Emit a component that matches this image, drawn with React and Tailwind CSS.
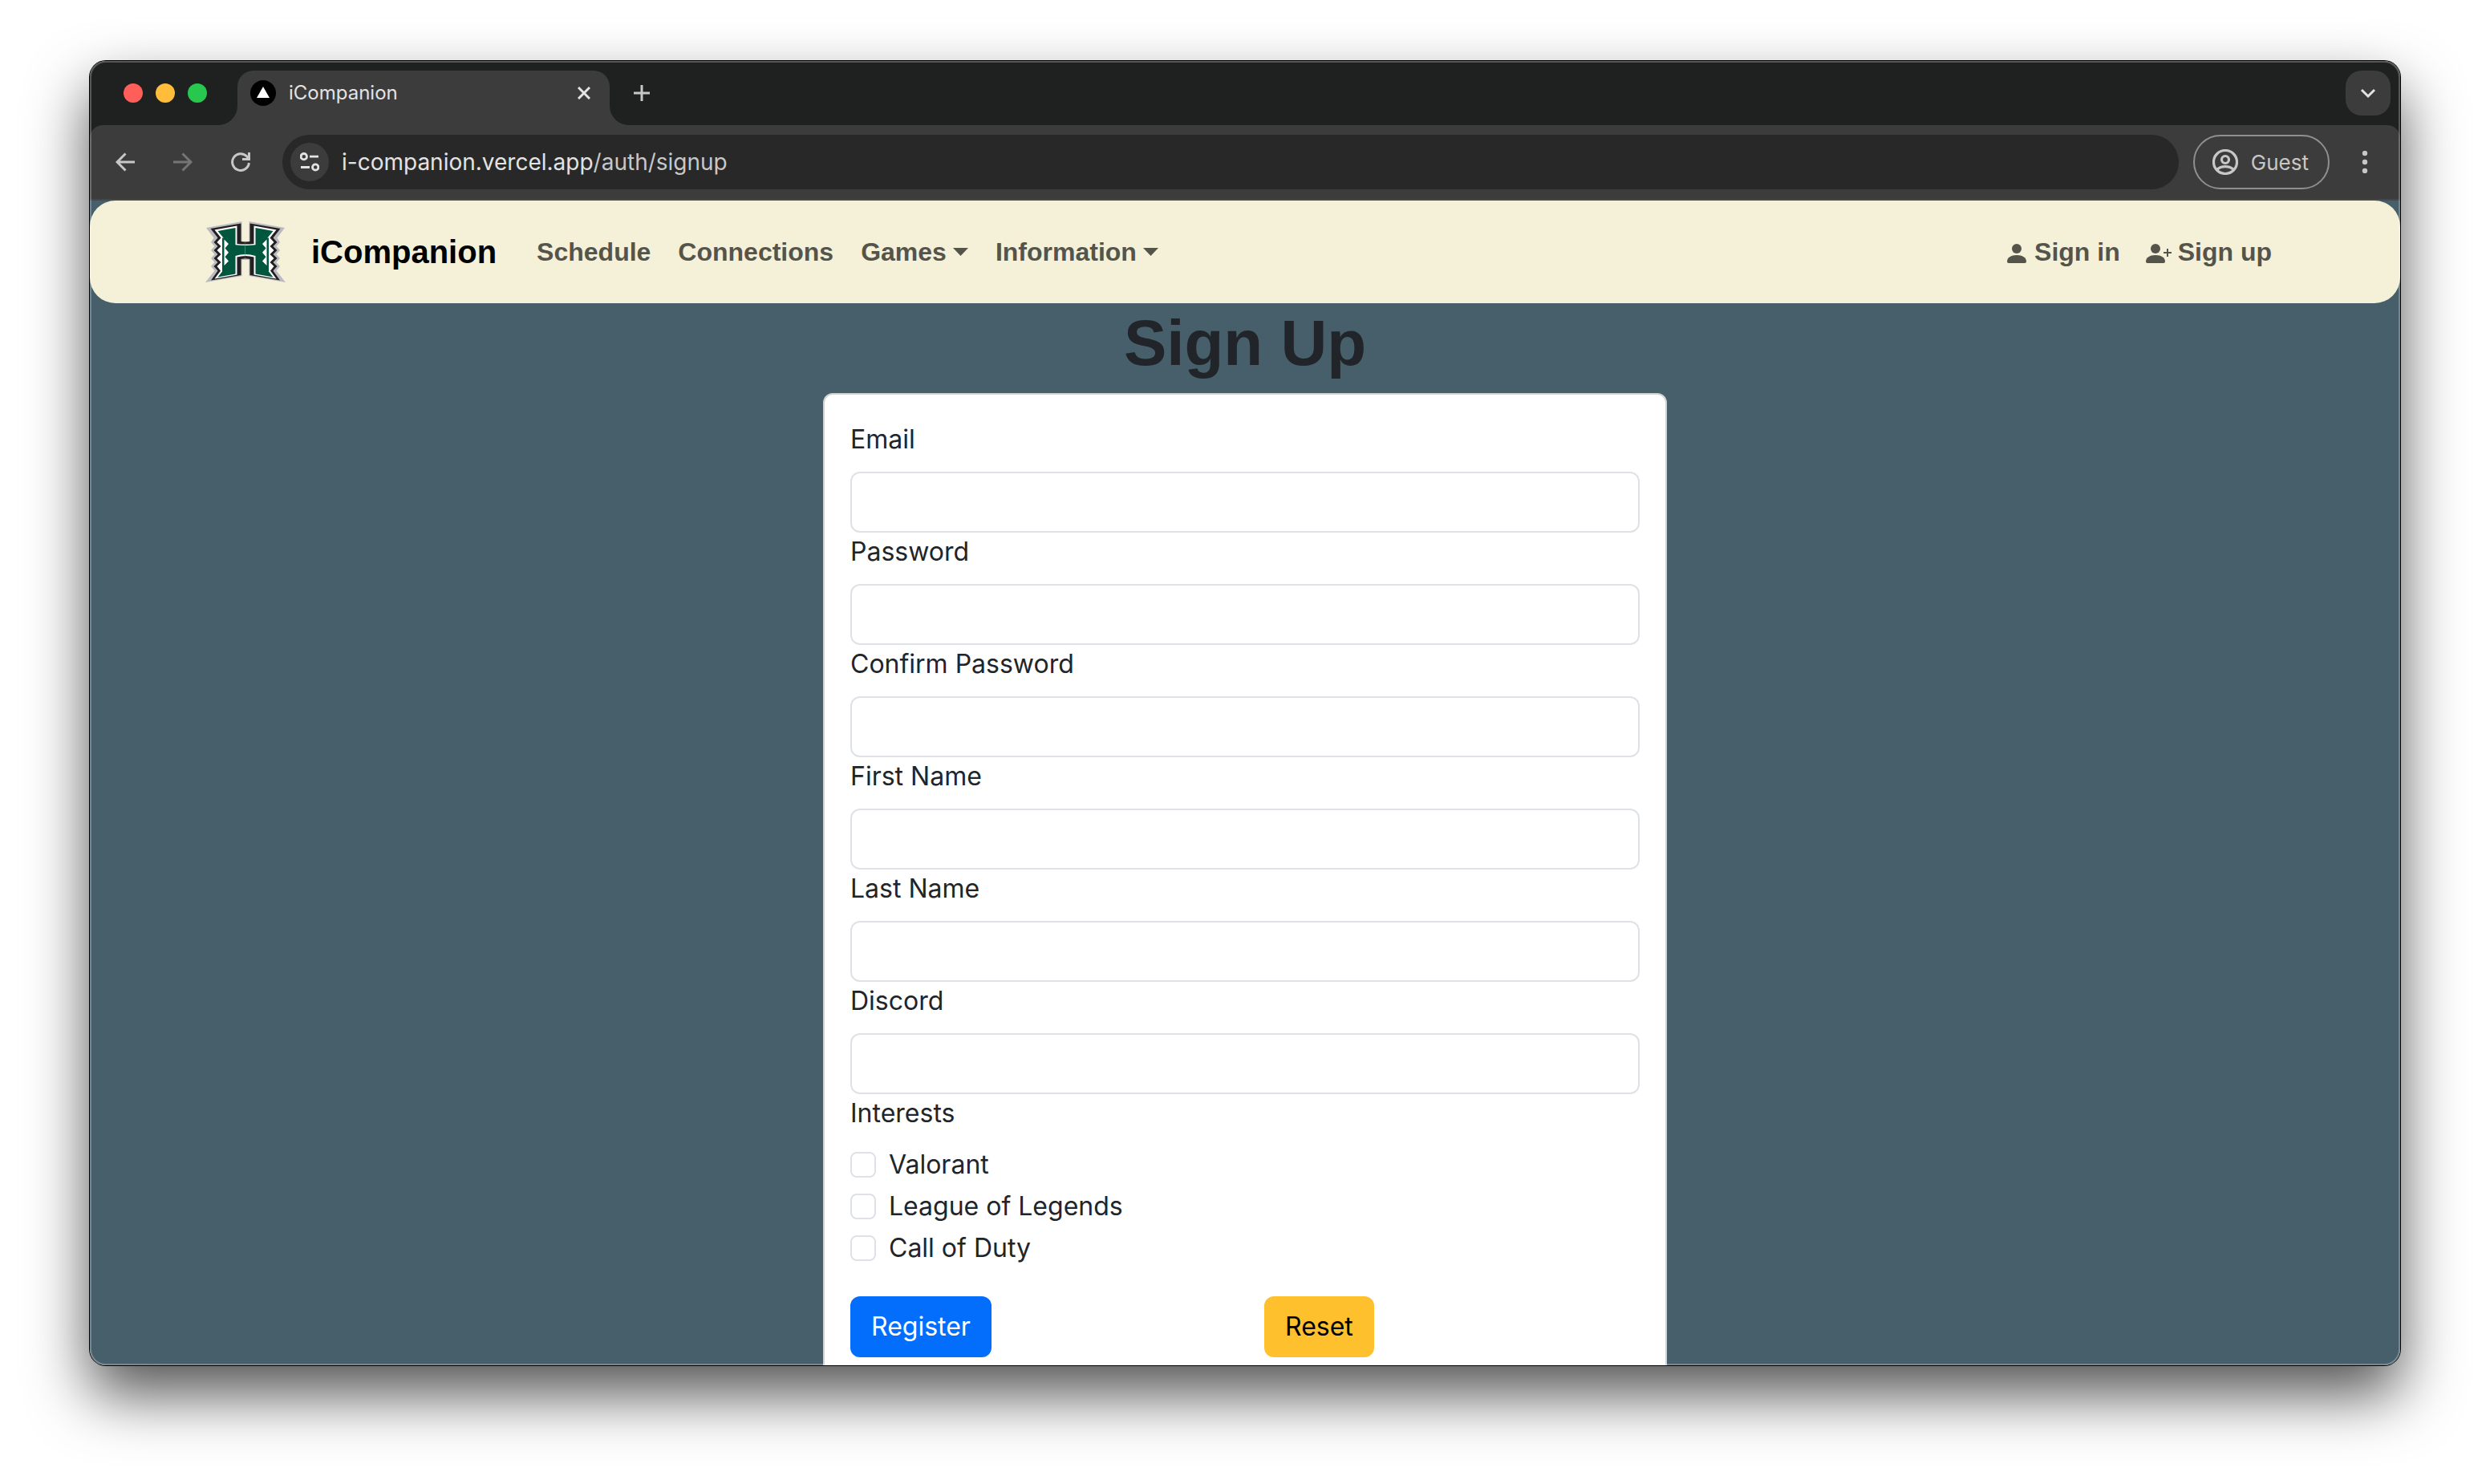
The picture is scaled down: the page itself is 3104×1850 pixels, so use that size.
import React from "react";

const FIELDS = [
  { id: "email", label: "Email", type: "email" },
  { id: "password", label: "Password", type: "password" },
  { id: "confirm", label: "Confirm Password", type: "password" },
  { id: "first", label: "First Name", type: "text" },
  { id: "last", label: "Last Name", type: "text" },
  { id: "discord", label: "Discord", type: "text" },
];

const INTERESTS = ["Valorant", "League of Legends", "Call of Duty"];

function TabStrip() {
  return (
    <div className="flex h-20 items-end bg-[#1f2120] pr-3">
      <div className="flex items-center gap-4 self-center pl-[42px]">
        <button aria-label="Close window" className="size-6 rounded-full bg-[#ff5f58]" />
        <button aria-label="Minimize window" className="size-6 rounded-full bg-[#ffbd3b]" />
        <button aria-label="Zoom window" className="size-6 rounded-full bg-[#28c84e]" />
      </div>
      <svg className="ml-3.5 size-6 text-[#3c3c3c]" viewBox="0 0 24 24" aria-hidden="true">
        <path d="M24 0v24H0A24 24 0 0 0 24 0z" fill="currentColor" />
      </svg>
      <div className="flex h-[68px] w-[464px] items-center rounded-t-[20px] bg-[#3c3c3c] pr-6 pb-3 pl-4">
        <svg className="size-8" viewBox="0 0 32 32" aria-hidden="true">
          <circle cx="16" cy="16" r="16" fill="#000" />
          <path d="M16 8l8 14H8z" fill="#fff" />
        </svg>
        <span className="ml-4 flex-1 text-2xl text-[#e3e3e3]">iCompanion</span>
        <button aria-label="Close tab" className="text-[#e3e3e3]">
          <svg className="size-4" viewBox="0 0 16 16" fill="none" stroke="currentColor" strokeWidth="3">
            <path d="M1 1l14 14M15 1L1 15" />
          </svg>
        </button>
      </div>
      <svg className="size-6 text-[#3c3c3c]" viewBox="0 0 24 24" aria-hidden="true">
        <path d="M0 0v24h24A24 24 0 0 1 0 0z" fill="currentColor" />
      </svg>
      <button aria-label="New tab" className="mb-[30px] ml-1.5 text-[#c7c7c7]">
        <svg className="size-5" viewBox="0 0 20 20" fill="none" stroke="currentColor" strokeWidth="3">
          <path d="M10 0v20M0 10h20" />
        </svg>
      </button>
      <button
        aria-label="Search tabs"
        className="mb-3 ml-auto flex size-14 items-center justify-center rounded-[20px] bg-[#3c3c3c] text-[#e3e3e3]"
      >
        <svg className="size-5" viewBox="0 0 20 20" fill="none" stroke="currentColor" strokeWidth="3">
          <path d="M2 6l8 8 8-8" />
        </svg>
      </button>
    </div>
  );
}

function Toolbar() {
  return (
    <div className="bg-[#1f2120]">
      <div className="flex h-[94px] items-center rounded-t-2xl border-b-2 border-[#474747] bg-[#3c3c3c] pr-10 pl-8 text-[#c7c7c7]">
        <button aria-label="Back">
          <svg className="size-6" viewBox="0 0 24 24" fill="none" stroke="currentColor" strokeWidth="3">
            <path d="M24 12H2M12.500 1.500L2 12l10.500 10.500" />
          </svg>
        </button>
        <button aria-label="Forward" className="ml-12 text-[#757575]">
          <svg className="size-6" viewBox="0 0 24 24" fill="none" stroke="currentColor" strokeWidth="3">
            <path d="M0 12h22M11.500 1.500L22 12 11.500 22.500" />
          </svg>
        </button>
        <button aria-label="Reload" className="ml-12">
          <svg className="size-6" viewBox="0 0 24 24" fill="none" stroke="currentColor" strokeWidth="3">
            <path d="M22.400 13A10.400 10.400 0 1 1 19.500 4.800L22 8" />
            <path d="M22.500 0v8.500H14" />
          </svg>
        </button>
        <div className="ml-10 flex h-[68px] flex-1 items-center rounded-full bg-[#282828] pl-2.5">
          <button aria-label="Site information" className="flex size-12 items-center justify-center rounded-full bg-[#3c3c3c] text-[#e3e3e3]">
            <svg className="size-6" viewBox="0 0 24 24" fill="none" stroke="currentColor" strokeWidth="2.800">
              <circle cx="4.800" cy="5.200" r="3.700" />
              <path d="M12 5.200h11M1 18.500h11" />
              <circle cx="19.200" cy="18.500" r="3.700" />
            </svg>
          </button>
          <div className="ml-4 text-[28px] text-[#c7c7c7]">
            <span className="text-[#e3e3e3]">i-companion.vercel.app</span>/auth/signup
          </div>
        </div>
        <button className="ml-[18px] flex h-[68px] items-center gap-4 rounded-full border-2 border-[#8f8f8f] pr-6 pl-[22px] text-[26px]">
          <svg className="size-8" viewBox="0 0 32 32" fill="none" stroke="currentColor" strokeWidth="3.200">
            <circle cx="16" cy="16" r="14.500" />
            <circle cx="16" cy="13" r="4.500" />
            <path d="M5.500 25.500C11 20.300 21 20.300 26.500 25.500" />
          </svg>
          Guest
        </button>
        <button aria-label="Menu" className="ml-10">
          <svg className="h-7 w-2" viewBox="0 0 8 28" fill="currentColor">
            <circle cx="4" cy="3" r="3.200" />
            <circle cx="4" cy="14" r="3.200" />
            <circle cx="4" cy="25" r="3.200" />
          </svg>
        </button>
      </div>
    </div>
  );
}

function HalfLogo() {
  return (
    <g>
      <path
        d="M44.500 0L0 8l9.500 12.500L6 26l4.500 5L6 36l4.500 5L6 46l4.500 5L6 56l4.500 5.500L-1 76l45.500-8V48h5V25h-5z"
        fill="#b9bbc0"
      />
      <path
        d="M43.500 2.500L5.500 9l9 11.500-5 5.500 5 5-5 5 5 5-5 5 5 5-5 5 5 5.500L6 73.500l37.500-6.500V47q3-.8 6-.8V25.500q-3 0-6-.5z"
        fill="#231f20"
      />
      <path
        d="M38.500 5.500L10.500 10.500l8 10-5 5.500 5 5-5 5 5 5-5 5 5 5-5 5 4.500 5.500L10.500 71.500l28-5V44.500q5-1.500 11-1.500V28.500q-6 0-11-.5z"
        fill="#fff"
      />
      <path
        d="M36.500 8L14.500 12l7.500 9v39l-7.500 9.500 22-4V43q6-2 13-2V30q-7 0-13-.8z"
        fill="#00573d"
      />
      <path d="M20 20.500h2.500v42H20z" fill="#00573d" />
      <path d="M22.500 22.500l5.500 5.500-4.500 5.400 4.500 5.400-4.500 5.400 4.500 5.400-5.500 5.400z" fill="#fff" />
    </g>
  );
}

function Logo() {
  return (
    <svg className="h-[76px] w-[100px]" viewBox="-1 0 100 76" role="img" aria-label="H logo">
      <HalfLogo />
      <g transform="translate(98 0) scale(-1 1)">
        <HalfLogo />
      </g>
    </svg>
  );
}

function NavLink({ children, caret }) {
  return (
    <a href="#" className="flex items-center px-4">
      {children}
      {caret && (
        <svg className="ml-2 h-2.5 w-[19px]" viewBox="0 0 19 10" fill="currentColor" aria-hidden="true">
          <path d="M0 0h19L9.500 10z" />
        </svg>
      )}
    </a>
  );
}

function Navbar() {
  return (
    <nav className="rounded-[32px] bg-[#f5f0d8] font-['Liberation_Sans',Arial,sans-serif] font-bold">
      <div className="mx-auto flex h-32 max-w-[2640px] items-center px-6 text-[32px] text-[#55544b]">
        <a href="#" className="flex items-center gap-8 pr-4 text-[40px] text-black">
          <Logo />
          iCompanion
        </a>
        <div className="ml-[18px] flex gap-0.5">
          <NavLink>Schedule</NavLink>
          <NavLink>Connections</NavLink>
          <NavLink caret>Games</NavLink>
          <NavLink caret>Information</NavLink>
        </div>
        <div className="ml-auto flex">
          <a href="#" className="flex items-center gap-2.5 px-4">
            <svg className="mt-1 size-6" viewBox="0 0 24 24" fill="currentColor" aria-hidden="true">
              <circle cx="12" cy="6" r="6" />
              <path d="M0 22c0-5 5-8 12-8s12 3 12 8q0 2-2 2H2q-2 0-2-2z" />
            </svg>
            Sign in
          </a>
          <a href="#" className="flex items-center gap-2 px-4">
            <svg className="mt-1 h-6 w-8" viewBox="0 0 32 24" fill="currentColor" aria-hidden="true">
              <circle cx="12" cy="6" r="6" />
              <path d="M0 22c0-5 5-8 12-8s12 3 12 8q0 2-2 2H2q-2 0-2-2z" />
              <path d="M26 6h2v4h4v2h-4v4h-2v-4h-4v-2h4z" />
            </svg>
            Sign up
          </a>
        </div>
      </div>
    </nav>
  );
}

function SignUpForm() {
  return (
    <form className="rounded-xl border-2 border-[#d2d2d2] bg-white p-8">
      {FIELDS.map((f) => (
        <div key={f.id}>
          <label htmlFor={f.id} className="mb-4 block leading-[48px]">
            {f.label}
          </label>
          <input
            id={f.id}
            type={f.type}
            className="block h-[76px] w-full rounded-xl border-2 border-[#dee2e6] bg-white px-6"
          />
        </div>
      ))}
      <fieldset>
        <legend className="mb-4 leading-[48px]">Interests</legend>
        {INTERESTS.map((name) => (
          <label key={name} className="mb-1 flex items-center gap-4 leading-[48px]">
            <input type="checkbox" className="size-8 appearance-none rounded-lg border-2 border-[#dee2e6] bg-white checked:bg-[#0d6efd]" />
            {name}
          </label>
        ))}
      </fieldset>
      <div className="grid grid-cols-2 gap-12 pt-8">
        <div>
          <button type="submit" className="h-[76px] rounded-xl bg-[#046efc] px-[26px] text-white">
            Register
          </button>
        </div>
        <div>
          <button type="reset" className="h-[76px] rounded-xl bg-[#ffc02d] px-[26px] text-black">
            Reset
          </button>
        </div>
      </div>
    </form>
  );
}

export default function App() {
  return (
    <div className="flex h-screen flex-col overflow-hidden bg-white px-28 pt-[76px] pb-[148px] font-['Inter',sans-serif]">
      <div className="relative flex min-h-0 flex-1 flex-col rounded-[20px] shadow-[0_0_0_1px_#000,0_36px_76px_rgba(0,0,0,0.68)]">
        <div className="flex min-h-0 flex-1 flex-col overflow-hidden rounded-[20px] bg-[#475f6b]">
          <TabStrip />
          <Toolbar />
          <div className="min-h-0 flex-1 overflow-hidden">
            <Navbar />
            <main className="mx-auto max-w-[2640px] text-[32px] text-[#212529]">
              <h1 className="mb-3 text-center font-['Liberation_Sans',Arial,sans-serif] text-[80px] leading-[100px] font-bold">
                Sign Up
              </h1>
              <div className="mx-auto w-5/12 px-6">
                <SignUpForm />
              </div>
            </main>
          </div>
        </div>
        <div className="pointer-events-none absolute inset-0 rounded-[20px] border-2 border-white/25" />
      </div>
    </div>
  );
}
